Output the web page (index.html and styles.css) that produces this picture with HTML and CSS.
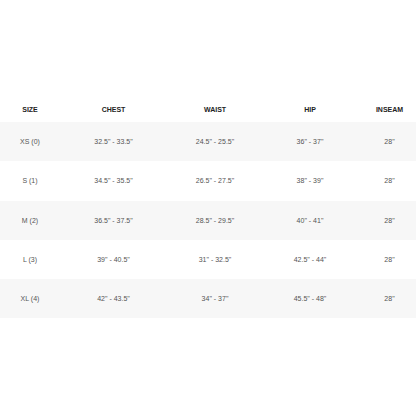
FILE: index.html
```html
<!DOCTYPE html>
<html>
<head>
<meta charset="utf-8">
<link rel="stylesheet" href="styles.css">
</head>
<body>
<div class="chart">
  <div class="row head">
    <div class="cell">SIZE</div><div class="cell">CHEST</div><div class="cell">WAIST</div><div class="cell">HIP</div><div class="cell last">INSEAM</div>
  </div>
  <div class="row shade">
    <div class="cell">XS (0)</div><div class="cell">32.5" - 33.5"</div><div class="cell">24.5" - 25.5"</div><div class="cell">36" - 37"</div><div class="cell last">28"</div>
  </div>
  <div class="row">
    <div class="cell">S (1)</div><div class="cell">34.5" - 35.5"</div><div class="cell">26.5" - 27.5"</div><div class="cell">38" - 39"</div><div class="cell last">28"</div>
  </div>
  <div class="row shade">
    <div class="cell">M (2)</div><div class="cell">36.5" - 37.5"</div><div class="cell">28.5" - 29.5"</div><div class="cell">40" - 41"</div><div class="cell last">28"</div>
  </div>
  <div class="row">
    <div class="cell">L (3)</div><div class="cell">39" - 40.5"</div><div class="cell">31" - 32.5"</div><div class="cell">42.5" - 44"</div><div class="cell last">28"</div>
  </div>
  <div class="row shade">
    <div class="cell">XL (4)</div><div class="cell">42" - 43.5"</div><div class="cell">34" - 37"</div><div class="cell">45.5" - 48"</div><div class="cell last">28"</div>
  </div>
</div>
</body>
</html>
```
FILE: styles.css
```css
html, body {
  margin: 0;
  padding: 0;
  background: #ffffff;
}
body {
  width: 416px;
  height: 416px;
  font-family: "Liberation Sans", Arial, sans-serif;
  font-size: 7px;
  color: #555555;
}
.chart {
  padding-top: 97px;
}
.row {
  display: grid;
  grid-template-columns: 60px 107px 96px 94px 59px;
  height: 39.3px;
  align-items: center;
}
.row.head {
  height: 25px;
  font-weight: bold;
  color: #222222;
}
.row.shade {
  background: #f7f7f7;
}
.cell {
  text-align: center;
  white-space: nowrap;
}
.cell.last {
  padding-left: 6px;
}
```
